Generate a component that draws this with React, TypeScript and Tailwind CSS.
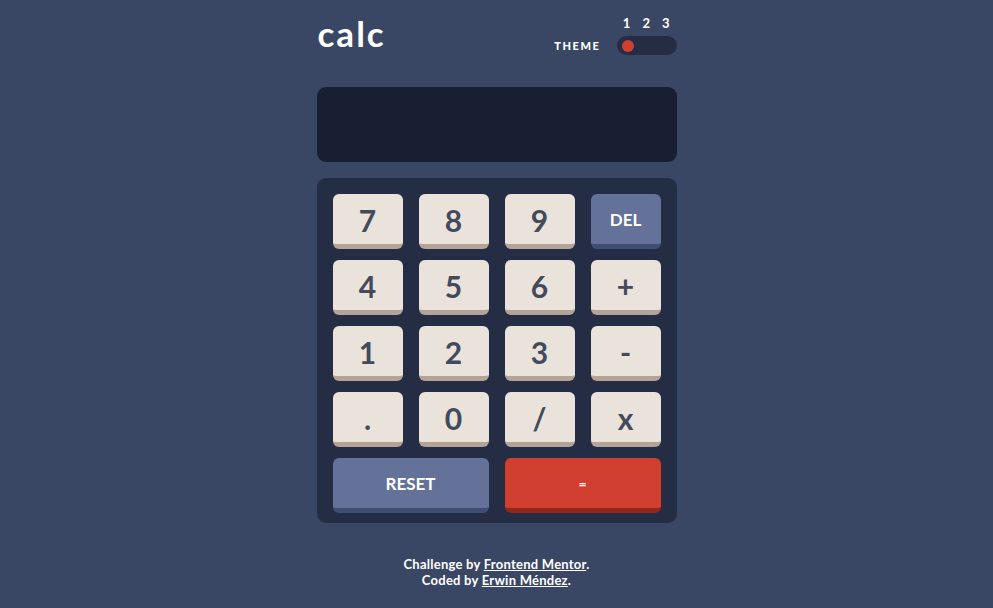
const keys = ["7", "8", "9", "DEL", "4", "5", "6", "+", "1", "2", "3", "-", ".", "0", "/", "x"];

const Key = ({ label }: { label: string }) => {
  if (label === "DEL") {
    return (
      <button className="h-[55px] rounded-[6px] bg-[#647198] border-b-[5px] border-[#414e73] text-white text-[17px] font-bold pt-[1px]">
        DEL
      </button>
    );
  }
  return (
    <button className="h-[55px] rounded-[6px] bg-[#eae3dc] border-b-[5px] border-[#b3a497] text-[#434a59] text-[30px] font-bold pt-[1px] leading-none">
      {label}
    </button>
  );
};

export default function App() {
  return (
    <div
      className="min-h-[608px] bg-[#3a4764] text-white"
      style={{ fontFamily: "Lato, 'Noto Sans', sans-serif" }}
    >
      <div className="w-[360px] mx-auto pt-[15px] pb-[20px]">
        <header className="flex items-end justify-between h-[40px]">
          <h1 className="text-[35px] font-bold leading-none tracking-[2px] mb-[4px] ml-px">calc</h1>
          <div className="flex flex-col items-end">
            <div className="flex gap-[12px] text-[13px] font-bold leading-none pr-[7px] mb-[6px]">
              <span>1</span>
              <span>2</span>
              <span>3</span>
            </div>
            <div className="flex items-center gap-[16px]">
              <span className="text-[11px] font-black tracking-[1.6px] leading-none">THEME</span>
              <div className="w-[60px] h-[19px] rounded-full bg-[#242d44] flex items-center px-[5px]">
                <span className="w-[12px] h-[12px] rounded-full bg-[#d03f2f]" />
              </div>
            </div>
          </div>
        </header>

        <div className="mt-[32px] h-[75px] rounded-[9px] bg-[#181f33]" />

        <div className="mt-[16px] rounded-[9px] bg-[#242d44] pt-[16px] px-[16px] pb-[10px] grid grid-cols-4 gap-x-[16px] gap-y-[11px]">
          {keys.map((k) => (
            <Key key={k} label={k} />
          ))}
          <button className="col-span-2 h-[55px] rounded-[6px] bg-[#647198] border-b-[5px] border-[#414e73] text-white text-[17px] font-bold pt-[1px]">
            RESET
          </button>
          <button className="col-span-2 h-[55px] rounded-[6px] bg-[#d03f2f] border-b-[5px] border-[#93261a] text-white text-[14px] font-bold pt-[1px]">
            =
          </button>
        </div>

        <footer className="mt-[33px] text-center text-[13px] tracking-[0.25px] font-bold leading-[16px]">
          <p>
            Challenge by <a className="underline">Frontend Mentor</a>.
          </p>
          <p>
            Coded by <a className="underline">Erwin Méndez</a>.
          </p>
        </footer>
      </div>
    </div>
  );
}
